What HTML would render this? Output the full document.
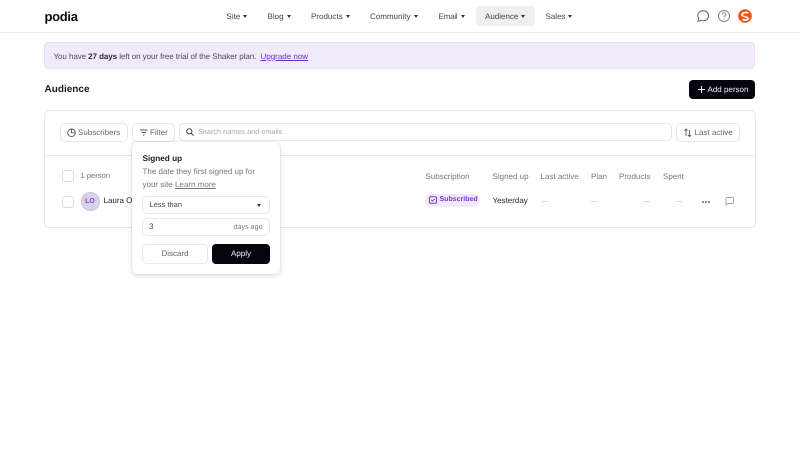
<!DOCTYPE html>
<html><head><meta charset="utf-8"><style>
html,body{margin:0;padding:0;width:800px;height:470px;overflow:hidden;background:#fff}
body{font-family:"Liberation Sans",sans-serif;color:#1d1d22;text-rendering:geometricPrecision}
#w{position:absolute;left:0;top:0;width:800px;height:470px;background:#fff;overflow:hidden;filter:blur(.3px)}
.a{position:absolute;white-space:nowrap}
.t{position:absolute;white-space:nowrap;font-size:8px;line-height:12px;letter-spacing:0;margin-top:.5px}
.nav{color:#44444c;top:10px}
.car{position:absolute;width:0;height:0;border-left:2.5px solid transparent;border-right:2.5px solid transparent;border-top:3px solid #33333a}
.btn{position:absolute;box-sizing:border-box;background:#fff;border:1px solid #e8e8ea;border-radius:5px}
.g{color:#77777e}
svg{position:absolute;overflow:visible;fill:none}
</style></head><body><div id="w">
<div class="a" style="left:0;top:32px;width:800px;height:1px;background:#e9e9eb"></div>
<div class="t" style="left:44.500px;top:7px;font-size:13px;line-height:18px;font-weight:700;color:#0b0b10;letter-spacing:-.3px">podia</div>

<div class="a" style="left:476px;top:6px;width:59px;height:20px;background:#efefef;border-radius:4px"></div>
<span class="t nav" style="left:226.500px">Site</span><i class="car" style="left:243px;top:15px"></i>
<span class="t nav" style="left:267.500px">Blog</span><i class="car" style="left:287px;top:15px"></i>
<span class="t nav" style="left:311px">Products</span><i class="car" style="left:346px;top:15px"></i>
<span class="t nav" style="left:370px">Community</span><i class="car" style="left:414px;top:15px"></i>
<span class="t nav" style="left:438.500px;letter-spacing:-.2px">Email</span><i class="car" style="left:460.500px;top:15px"></i>
<span class="t nav" style="left:485px">Audience</span><i class="car" style="left:521px;top:15px"></i>
<span class="t nav" style="left:545.500px">Sales</span><i class="car" style="left:568px;top:15px"></i>

<svg style="left:697px;top:10px" width="12" height="12" viewBox="0 0 12 12" stroke="#66666c" stroke-width="1"><path d="M6.300.8C3.100.8.800 2.900.800 5.600c0 1.100.4 2.100 1 2.900L1 11.300l3-1c.7.300 1.500.5 2.300.5 3 0 5.200-2.200 5.200-5S9.300.8 6.300.8z"/></svg>
<svg style="left:718px;top:10px" width="12" height="12" viewBox="0 0 12 12" stroke="#77777c" stroke-width=".9"><circle cx="6" cy="6" r="5.500"/><path d="M4.200 4.600c0-1.100.8-1.800 1.800-1.800s1.800.7 1.800 1.600c0 1.300-1.800 1.400-1.800 2.800"/><path d="M6 8.200v1"/></svg>
<svg style="left:738px;top:9px" width="14" height="14" viewBox="0 0 14 14"><circle cx="7" cy="7" r="6.800" fill="#ea5414"/><path d="M10.500 3.800C7.500 2.800 4 3.800 4 6c0 2 6 1.500 6 3.500 0 1.500-3 2-5.500 1" stroke="#fff" stroke-width="1.600"/></svg>

<div class="a" style="left:44px;top:42px;width:711px;height:27px;box-sizing:border-box;background:#f1eafa;border:1px solid #e9e0f6;border-radius:4px"></div>
<div class="t" style="left:53.500px;top:50px;color:#4a4a52;letter-spacing:-.07px">You have <b style="color:#2a2a30">27 days</b> left on your free trial of the Shaker plan.</div>
<div class="t" style="left:260.500px;top:50px;color:#6d2fc4;text-decoration:underline">Upgrade now</div>

<div class="t" style="left:44.500px;top:83px;font-size:10px;font-weight:700;color:#1c1c22">Audience</div>
<div class="a" style="left:689px;top:80px;width:66px;height:19px;background:#05050e;border-radius:4px"></div>
<svg style="left:698px;top:86px" width="7" height="7" stroke="#fff" stroke-width="1"><path d="M3.500 0v7M0 3.500h7"/></svg>
<div class="t" style="left:707.500px;top:83.500px;color:#f0f0f0">Add person</div>

<div class="a" style="left:44px;top:110px;width:712px;height:118px;box-sizing:border-box;border:1px solid #e8e8ea;border-radius:5px"></div>
<div class="a" style="left:45px;top:155px;width:710px;height:1px;background:#eaeaec"></div>

<div class="btn" style="left:60px;top:123px;width:68px;height:19px"></div>
<svg style="left:67px;top:128px" width="9" height="9" stroke="#55555c" stroke-width=".9"><circle cx="4.500" cy="4.800" r="3.800"/><path d="M4.500 1v3.800h3.800"/></svg>
<div class="t g" style="left:78px;top:126.500px;color:#66666d">Subscribers</div>

<div class="btn" style="left:132px;top:123px;width:43px;height:19px"></div>
<svg style="left:140px;top:129px" width="8" height="7" stroke="#55555c" stroke-width=".9"><path d="M0 1h7.500M1.500 3.500h4.500M3 6h1.500"/></svg>
<div class="t g" style="left:150px;top:126.500px;color:#66666d">Filter</div>

<div class="btn" style="left:179px;top:123px;width:493px;height:18px;border-radius:4px"></div>
<svg style="left:186px;top:128px" width="8" height="8" stroke="#44444a" stroke-width="1"><circle cx="3.300" cy="3.300" r="2.600"/><path d="M5.200 5.200L7.500 7.500"/></svg>
<div class="t" style="left:198px;top:125.500px;font-size:7.300px;color:#a9a9ae">Search names and emails</div>

<div class="btn" style="left:676px;top:123px;width:64px;height:19px"></div>
<svg style="left:684px;top:128px" width="8" height="9" stroke="#55555c" stroke-width=".9"><path d="M2 8V1M.4 2.600L2 1l1.600 1.600M5.500 2v6.500M3.900 7L5.500 8.500 7.100 7"/></svg>
<div class="t g" style="left:694.500px;top:126.500px;color:#66666d">Last active</div>

<div class="a" style="left:62px;top:170px;width:10px;height:10px;border:1px solid #dcdcdf;border-radius:3px"></div>
<div class="t g" style="left:80.500px;top:169.500px;font-size:7.600px">1 person</div>
<div class="a" style="left:62px;top:196px;width:10px;height:10px;border:1px solid #dcdcdf;border-radius:3px"></div>
<div class="a" style="left:81px;top:192px;width:17px;height:17px;border:1px solid #c9c2dc;border-radius:50%;background:#d9d3e8"></div>
<div class="t" style="left:80.500px;top:195.500px;width:19px;text-align:center;font-size:7px;font-weight:700;color:#7b3fd0">LO</div>
<div class="t" style="left:103.500px;top:194.500px;color:#222228">Laura O'</div>

<div class="t g" style="left:425.500px;top:170.500px">Subscription</div>
<div class="t g" style="left:492.500px;top:170.500px">Signed up</div>
<div class="t g" style="left:540.500px;top:170.500px">Last active</div>
<div class="t g" style="left:591px;top:170.500px">Plan</div>
<div class="t g" style="left:619px;top:170.500px">Products</div>
<div class="t g" style="left:663px;top:170.500px">Spent</div>

<div class="a" style="left:425px;top:194px;width:55px;height:13px;background:#f1eafa;border-radius:7px"></div>
<svg style="left:429px;top:196px" width="8" height="8" stroke="#7a3cd0" stroke-width="1"><rect x=".5" y=".8" width="7" height="6.400" rx="1"/><path d="M2.200 3.800l1.300 1.300 2.300-2.300"/></svg>
<div class="t" style="left:439.500px;top:193.500px;font-size:7px;font-weight:700;color:#7a3cd0">Subscribed</div>
<div class="t" style="left:492.500px;top:194.500px;color:#2a2a30">Yesterday</div>
<div class="a" style="left:541px;top:201px;width:7px;height:1px;background:#d8d8da"></div>
<div class="a" style="left:591px;top:201px;width:7px;height:1px;background:#d8d8da"></div>
<div class="a" style="left:643px;top:201px;width:7px;height:1px;background:#d8d8da"></div>
<div class="a" style="left:676px;top:201px;width:7px;height:1px;background:#d8d8da"></div>
<div class="a" style="left:702px;top:201px;width:1.500px;height:1.500px;background:#77777c;border-radius:50%;box-shadow:3px 0 #77777c,6px 0 #77777c"></div>
<svg style="left:725px;top:197px" width="9" height="9" stroke="#a8a8ac" stroke-width=".9"><path d="M1.300.5h6.400a.8.800 0 0 1 .8.800v4.400a.8.800 0 0 1-.8.800H3L1 8V1.300a.8.800 0 0 1 .3-.8z"/></svg>

<div class="a" style="left:132px;top:142px;width:148px;height:132px;background:#fff;border-radius:5px;box-shadow:0 0 1px rgba(0,0,0,.25),0 2px 6px rgba(0,0,0,.13)"></div>
<div class="t" style="left:142.500px;top:152px;font-weight:700;color:#1c1c22;font-size:8.200px">Signed up</div>
<div class="t g" style="left:142.500px;top:165.500px">The date they first signed up for</div>
<div class="t g" style="left:142.500px;top:178.500px">your site <span style="text-decoration:underline">Learn more</span></div>
<div class="btn" style="left:142px;top:196px;width:128px;height:18px"></div>
<div class="t" style="left:149.500px;top:198px;font-size:7.500px;color:#44444c">Less than</div>
<i class="car" style="left:257px;top:204px"></i>
<div class="btn" style="left:142px;top:218px;width:128px;height:18px"></div>
<div class="t" style="left:149px;top:220.500px;color:#44444c">3</div>
<div class="t g" style="left:233.500px;top:220.500px;font-size:7.200px">days ago</div>
<div class="btn" style="left:142px;top:244px;width:66px;height:20px"></div>
<div class="t g" style="left:142px;top:247.500px;width:66px;text-align:center;color:#66666d">Discard</div>
<div class="a" style="left:212px;top:244px;width:58px;height:20px;background:#05050e;border-radius:4px"></div>
<div class="t" style="left:212px;top:247.500px;width:58px;text-align:center;color:#f0f0f0">Apply</div>
</div></body></html>
